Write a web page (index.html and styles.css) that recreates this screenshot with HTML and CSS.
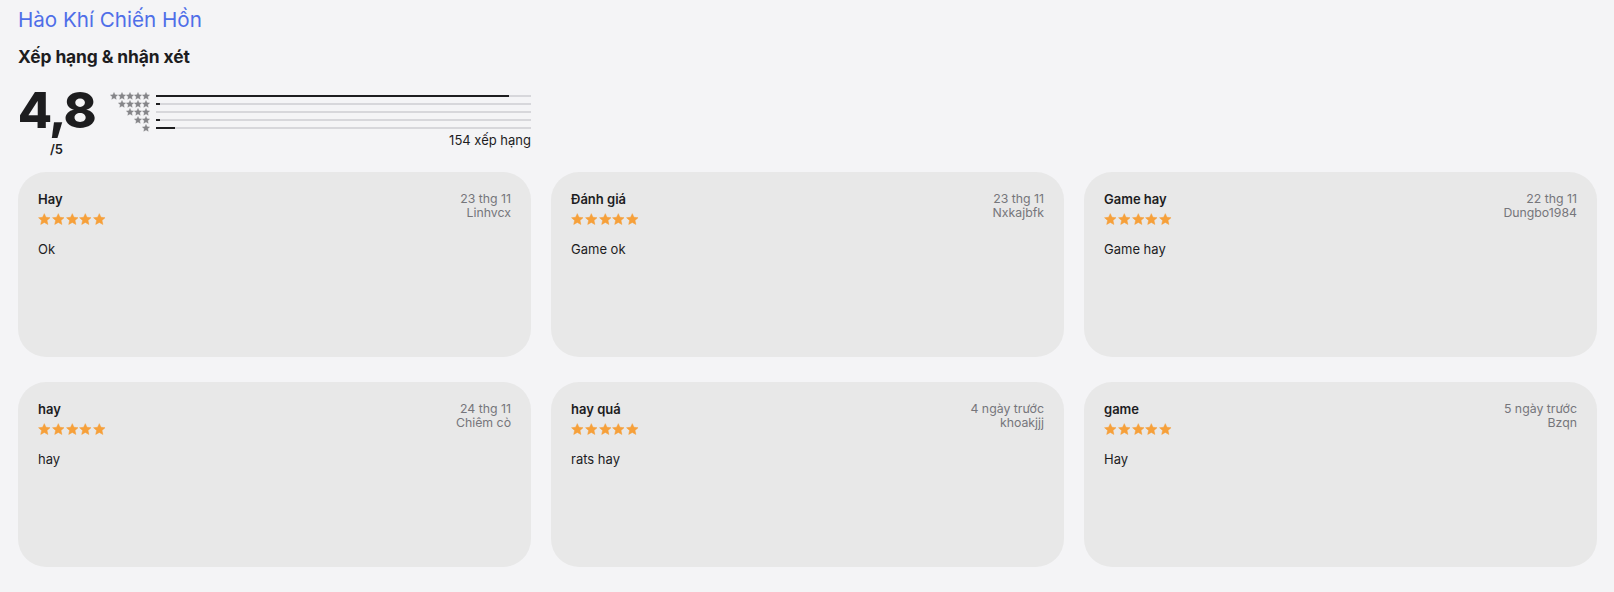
FILE: index.html
```html
<!DOCTYPE html>
<html lang="vi">
<head>
<meta charset="utf-8">
<title>Hào Khí Chiến Hồn</title>
<link rel="stylesheet" href="styles.css">
</head>
<body>
<svg class="defs" width="0" height="0" aria-hidden="true">
  <defs>
    <path id="star" d="M12 1.2L15.2 8.2L22.9 9L17.1 14.2L18.8 21.8L12 17.9L5.2 21.8L6.9 14.2L1.1 9L8.8 8.2Z"/>
  </defs>
</svg>
<main class="page">
  <h1 class="app-title">Hào Khí Chiến Hồn</h1>
  <h2 class="section-title">Xếp hạng &amp; nhận xét</h2>

  <section class="ratings">
    <div class="average">
      <span class="average-value">4,8</span>
      <span class="average-out">/5</span>
    </div>
    <div class="histogram">
      <div class="hist-row">
        <span class="hist-stars"><svg class="hstar" viewBox="0 0 24 24"><use href="#star"/></svg><svg class="hstar" viewBox="0 0 24 24"><use href="#star"/></svg><svg class="hstar" viewBox="0 0 24 24"><use href="#star"/></svg><svg class="hstar" viewBox="0 0 24 24"><use href="#star"/></svg><svg class="hstar" viewBox="0 0 24 24"><use href="#star"/></svg></span>
        <div class="hist-track"><div class="hist-fill" style="width:94%"></div></div>
      </div>
      <div class="hist-row">
        <span class="hist-stars"><svg class="hstar" viewBox="0 0 24 24"><use href="#star"/></svg><svg class="hstar" viewBox="0 0 24 24"><use href="#star"/></svg><svg class="hstar" viewBox="0 0 24 24"><use href="#star"/></svg><svg class="hstar" viewBox="0 0 24 24"><use href="#star"/></svg></span>
        <div class="hist-track"><div class="hist-fill" style="width:1%"></div></div>
      </div>
      <div class="hist-row">
        <span class="hist-stars"><svg class="hstar" viewBox="0 0 24 24"><use href="#star"/></svg><svg class="hstar" viewBox="0 0 24 24"><use href="#star"/></svg><svg class="hstar" viewBox="0 0 24 24"><use href="#star"/></svg></span>
        <div class="hist-track"><div class="hist-fill" style="width:0%"></div></div>
      </div>
      <div class="hist-row">
        <span class="hist-stars"><svg class="hstar" viewBox="0 0 24 24"><use href="#star"/></svg><svg class="hstar" viewBox="0 0 24 24"><use href="#star"/></svg></span>
        <div class="hist-track"><div class="hist-fill" style="width:1%"></div></div>
      </div>
      <div class="hist-row">
        <span class="hist-stars"><svg class="hstar" viewBox="0 0 24 24"><use href="#star"/></svg></span>
        <div class="hist-track"><div class="hist-fill" style="width:5%"></div></div>
      </div>
      <div class="hist-count">154 xếp hạng</div>
    </div>
  </section>

  <section class="reviews">
    <article class="review">
      <div class="review-head">
        <div class="review-left">
          <h3 class="review-title">Hay</h3>
          <div class="review-stars"><svg class="rstar" viewBox="0 0 24 24"><use href="#star"/></svg><svg class="rstar" viewBox="0 0 24 24"><use href="#star"/></svg><svg class="rstar" viewBox="0 0 24 24"><use href="#star"/></svg><svg class="rstar" viewBox="0 0 24 24"><use href="#star"/></svg><svg class="rstar" viewBox="0 0 24 24"><use href="#star"/></svg></div>
        </div>
        <div class="review-meta"><span>23 thg 11</span><span>Linhvcx</span></div>
      </div>
      <p class="review-body">Ok</p>
    </article>
    <article class="review">
      <div class="review-head">
        <div class="review-left">
          <h3 class="review-title">Đánh giá</h3>
          <div class="review-stars"><svg class="rstar" viewBox="0 0 24 24"><use href="#star"/></svg><svg class="rstar" viewBox="0 0 24 24"><use href="#star"/></svg><svg class="rstar" viewBox="0 0 24 24"><use href="#star"/></svg><svg class="rstar" viewBox="0 0 24 24"><use href="#star"/></svg><svg class="rstar" viewBox="0 0 24 24"><use href="#star"/></svg></div>
        </div>
        <div class="review-meta"><span>23 thg 11</span><span>Nxkajbfk</span></div>
      </div>
      <p class="review-body">Game ok</p>
    </article>
    <article class="review">
      <div class="review-head">
        <div class="review-left">
          <h3 class="review-title">Game hay</h3>
          <div class="review-stars"><svg class="rstar" viewBox="0 0 24 24"><use href="#star"/></svg><svg class="rstar" viewBox="0 0 24 24"><use href="#star"/></svg><svg class="rstar" viewBox="0 0 24 24"><use href="#star"/></svg><svg class="rstar" viewBox="0 0 24 24"><use href="#star"/></svg><svg class="rstar" viewBox="0 0 24 24"><use href="#star"/></svg></div>
        </div>
        <div class="review-meta"><span>22 thg 11</span><span>Dungbo1984</span></div>
      </div>
      <p class="review-body">Game hay</p>
    </article>
    <article class="review">
      <div class="review-head">
        <div class="review-left">
          <h3 class="review-title">hay</h3>
          <div class="review-stars"><svg class="rstar" viewBox="0 0 24 24"><use href="#star"/></svg><svg class="rstar" viewBox="0 0 24 24"><use href="#star"/></svg><svg class="rstar" viewBox="0 0 24 24"><use href="#star"/></svg><svg class="rstar" viewBox="0 0 24 24"><use href="#star"/></svg><svg class="rstar" viewBox="0 0 24 24"><use href="#star"/></svg></div>
        </div>
        <div class="review-meta"><span>24 thg 11</span><span>Chiêm cò</span></div>
      </div>
      <p class="review-body">hay</p>
    </article>
    <article class="review">
      <div class="review-head">
        <div class="review-left">
          <h3 class="review-title">hay quá</h3>
          <div class="review-stars"><svg class="rstar" viewBox="0 0 24 24"><use href="#star"/></svg><svg class="rstar" viewBox="0 0 24 24"><use href="#star"/></svg><svg class="rstar" viewBox="0 0 24 24"><use href="#star"/></svg><svg class="rstar" viewBox="0 0 24 24"><use href="#star"/></svg><svg class="rstar" viewBox="0 0 24 24"><use href="#star"/></svg></div>
        </div>
        <div class="review-meta"><span>4 ngày trước</span><span>khoakjjj</span></div>
      </div>
      <p class="review-body">rats hay</p>
    </article>
    <article class="review">
      <div class="review-head">
        <div class="review-left">
          <h3 class="review-title">game</h3>
          <div class="review-stars"><svg class="rstar" viewBox="0 0 24 24"><use href="#star"/></svg><svg class="rstar" viewBox="0 0 24 24"><use href="#star"/></svg><svg class="rstar" viewBox="0 0 24 24"><use href="#star"/></svg><svg class="rstar" viewBox="0 0 24 24"><use href="#star"/></svg><svg class="rstar" viewBox="0 0 24 24"><use href="#star"/></svg></div>
        </div>
        <div class="review-meta"><span>5 ngày trước</span><span>Bzqn</span></div>
      </div>
      <p class="review-body">Hay</p>
    </article>
  </section>
</main>
</body>
</html>
```

FILE: styles.css
```css
* { box-sizing: border-box; }

html, body {
  margin: 0;
  padding: 0;
  background: #f4f4f6;
}

body {
  font-family: Inter, "Noto Sans", "Liberation Sans", sans-serif;
  color: #1d1d1f;
}

.defs {
  position: absolute;
  width: 0;
  height: 0;
  overflow: hidden;
}

.page {
  padding: 6px 17px 24px 18px;
}

.app-title {
  margin: 0;
  font-size: 20.6px;
  line-height: 28px;
  font-weight: 400;
  color: #4f6ee8;
}

.section-title {
  margin: 12px 0 0;
  font-size: 17.4px;
  line-height: 22px;
  font-weight: 700;
  letter-spacing: -0.1px;
}

.ratings {
  display: flex;
  align-items: flex-start;
  gap: 15px;
  margin-top: 17px;
}

.average {
  display: flex;
  flex-direction: column;
  align-items: center;
  width: 77px;
}

.average-value {
  font-size: 50px;
  line-height: 50px;
  font-weight: 800;
  letter-spacing: -1.5px;
}

.average-out {
  margin-top: 6px;
  font-size: 13px;
  line-height: 16px;
  font-weight: 600;
}

.histogram {
  width: 421px;
  margin-top: 7px;
}

.hist-row {
  display: flex;
  align-items: center;
  gap: 6px;
  height: 8px;
}

.hist-stars {
  display: flex;
  justify-content: flex-end;
  width: 40px;
  gap: 0;
}

.hstar {
  display: block;
  width: 8px;
  height: 8px;
  fill: #858589;
  stroke: #858589;
  stroke-width: 1;
  stroke-linejoin: round;
}

.hist-track {
  flex: 1;
  height: 2px;
  background: #d7d7db;
}

.hist-fill {
  height: 2px;
  background: #1d1d1f;
}

.hist-count {
  text-align: right;
  font-size: 13px;
  line-height: 16px;
  color: #1d1d1f;
}

.reviews {
  display: grid;
  grid-template-columns: repeat(3, 1fr);
  column-gap: 20px;
  row-gap: 25px;
  margin-top: 15px;
}

.review {
  height: 185px;
  padding: 19px 20px 20px;
  background: #e8e8e8;
  border-radius: 28px;
}

.review-head {
  display: flex;
  justify-content: space-between;
  align-items: flex-start;
}

.review-title {
  margin: 0;
  font-size: 13px;
  line-height: 16px;
  font-weight: 600;
}

.review-stars {
  display: flex;
  gap: 1.2px;
  margin-top: 6px;
}

.rstar {
  display: block;
  width: 12.6px;
  height: 12.6px;
  fill: #f6a03a;
  stroke: #f6a03a;
  stroke-width: 1;
  stroke-linejoin: round;
}

.review-meta {
  display: flex;
  flex-direction: column;
  align-items: flex-end;
  margin-top: 1px;
  font-size: 12.3px;
  line-height: 14px;
  color: #76767b;
}

.review-body {
  margin: 14px 0 0;
  font-size: 13px;
  line-height: 18px;
}
```
